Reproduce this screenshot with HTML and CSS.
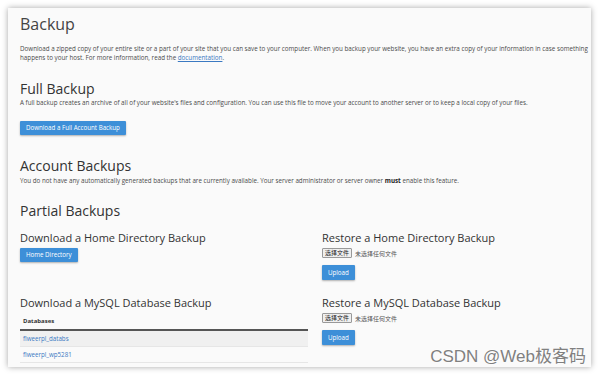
FILE: index.html
```html
<!DOCTYPE html>
<html lang="en">
<head>
    <meta charset="UTF-8">
    <meta name="viewport" content="width=device-width, initial-scale=1.0">
    <title>Backup</title>
    <link rel="stylesheet" href="styles.css">
</head>
<body>
    <div class="card">
        <h1>Backup</h1>
        <p class="intro">Download a zipped copy of your entire site or a part of your site that you can save to your computer. When you backup your website, you have an extra copy of your information in case something happens to your host. For more information, read the <a href="#">documentation</a>.</p>

        <h2 class="full">Full Backup</h2>
        <p>A full backup creates an archive of all of your website's files and configuration. You can use this file to move your account to another server or to keep a local copy of your files.</p>
        <div class="btn-row"><a class="btn" href="#">Download a Full Account Backup</a></div>

        <h2 class="account">Account Backups</h2>
        <p class="account-text">You do not have any automatically generated backups that are currently available. Your server administrator or server owner <strong>must</strong> enable this feature.</p>

        <h2 class="partial">Partial Backups</h2>
        <div class="partial-grid">
            <div class="col">
                <h3>Download a Home Directory Backup</h3>
                <a class="btn btn-home" href="#">Home Directory</a>
            </div>
            <div class="col">
                <h3>Restore a Home Directory Backup</h3>
                <div class="file-input"><span class="file-btn">选择文件</span><span class="file-none">未选择任何文件</span></div>
                <a class="btn btn-upload" href="#">Upload</a>
            </div>
            <div class="col">
                <h3>Download a MySQL Database Backup</h3>
                <div class="db-table">
                    <div class="db-head">Databases</div>
                    <div class="db-row odd"><a href="#">flweerpl_databs</a></div>
                    <div class="db-row"><a href="#">flweerpl_wp5281</a></div>
                </div>
            </div>
            <div class="col">
                <h3>Restore a MySQL Database Backup</h3>
                <div class="file-input"><span class="file-btn">选择文件</span><span class="file-none">未选择任何文件</span></div>
                <a class="btn btn-upload" href="#">Upload</a>
            </div>
        </div>
        <div class="watermark">CSDN @Web极客码</div>
    </div>
</body>
</html>
```

FILE: styles.css
```css
* {
  box-sizing: border-box;
  margin: 0;
  padding: 0;
}

body {
  --text: #333333;
  --muted: #4a4a4a;
  --blue: #3d8fd8;
  --link: #3b79c2;

  background: #ffffff;
  font-family: 'Open Sans', 'Noto Sans CJK SC', sans-serif;
  color: var(--text);
}

.card {
  position: relative;
  margin: 8px 10px 10px 8px;
  height: 359px;
  padding: 5px 12px 0 12px;
  background: #fafafa;
  box-shadow: 0 0 6px rgba(0, 0, 0, 0.35);
  overflow: hidden;
}

h1 {
  font-size: 16px;
  font-weight: 400;
  line-height: 22px;
  color: #444;
}

h2 {
  font-size: 14px;
  font-weight: 400;
  line-height: 19px;
  color: #333;
}

h2.full {
  margin-top: 17px;
}

h2.account {
  margin-top: 21px;
}

h2.partial {
  margin-top: 16px;
}

h3 {
  font-size: 11px;
  font-weight: 400;
  line-height: 15px;
  color: #333;
}

p {
  font-size: 6.25px;
  line-height: 9px;
  color: var(--muted);
}

p.intro {
  margin-top: 9px;
  margin-right: -11px;
}

p.account-text {
  margin-top: 1px;
}

a {
  color: var(--link);
}

strong {
  font-weight: 700;
  color: #222;
}

.btn-row {
  margin-top: 14px;
  height: 14px;
}

.btn {
  display: inline-block;
  background: var(--blue);
  color: #ffffff;
  text-decoration: none;
  font-size: 6.2px;
  line-height: 14px;
  padding: 0 6px;
  border-radius: 1px;
  box-shadow: 0 1px 2px rgba(0, 0, 0, 0.3);
  vertical-align: top;
}

.partial-grid {
  display: grid;
  grid-template-columns: 288px 1fr;
  grid-template-rows: 65px 1fr;
  column-gap: 14px;
  margin-top: 10px;
}

.btn-home {
  margin-top: 3px;
}

.file-input {
  display: flex;
  align-items: center;
  gap: 3px;
  margin-top: 3px;
  height: 10px;
  font-size: 6px;
  font-family: 'Noto Sans CJK SC', sans-serif;
  color: #555;
}

.file-btn {
  display: inline-block;
  background: #efefef;
  border: 1px solid #999;
  border-radius: 1px;
  padding: 0 2px;
  line-height: 8px;
  color: #222;
}

.col .btn-upload {
  margin-top: 7px;
  line-height: 15px;
}

.db-table {
  margin-top: 4px;
}

.db-head {
  font-size: 6px;
  font-weight: 700;
  line-height: 15px;
  padding-left: 3px;
  color: #333;
  border-bottom: 2px solid #555;
}

.db-row {
  font-size: 6.2px;
  line-height: 15px;
  padding-left: 3px;
  border-bottom: 1px solid #e6e6e6;
}

.db-row.odd {
  background: #f0f0f0;
}

.db-row a {
  text-decoration: none;
}

.watermark {
  position: absolute;
  right: 5px;
  bottom: 0;
  font-family: 'Liberation Sans', 'Noto Sans CJK SC', sans-serif;
  font-size: 17px;
  color: #808080;
  text-shadow: 0 0 2px #fff, 0 0 2px #fff;
}
```
